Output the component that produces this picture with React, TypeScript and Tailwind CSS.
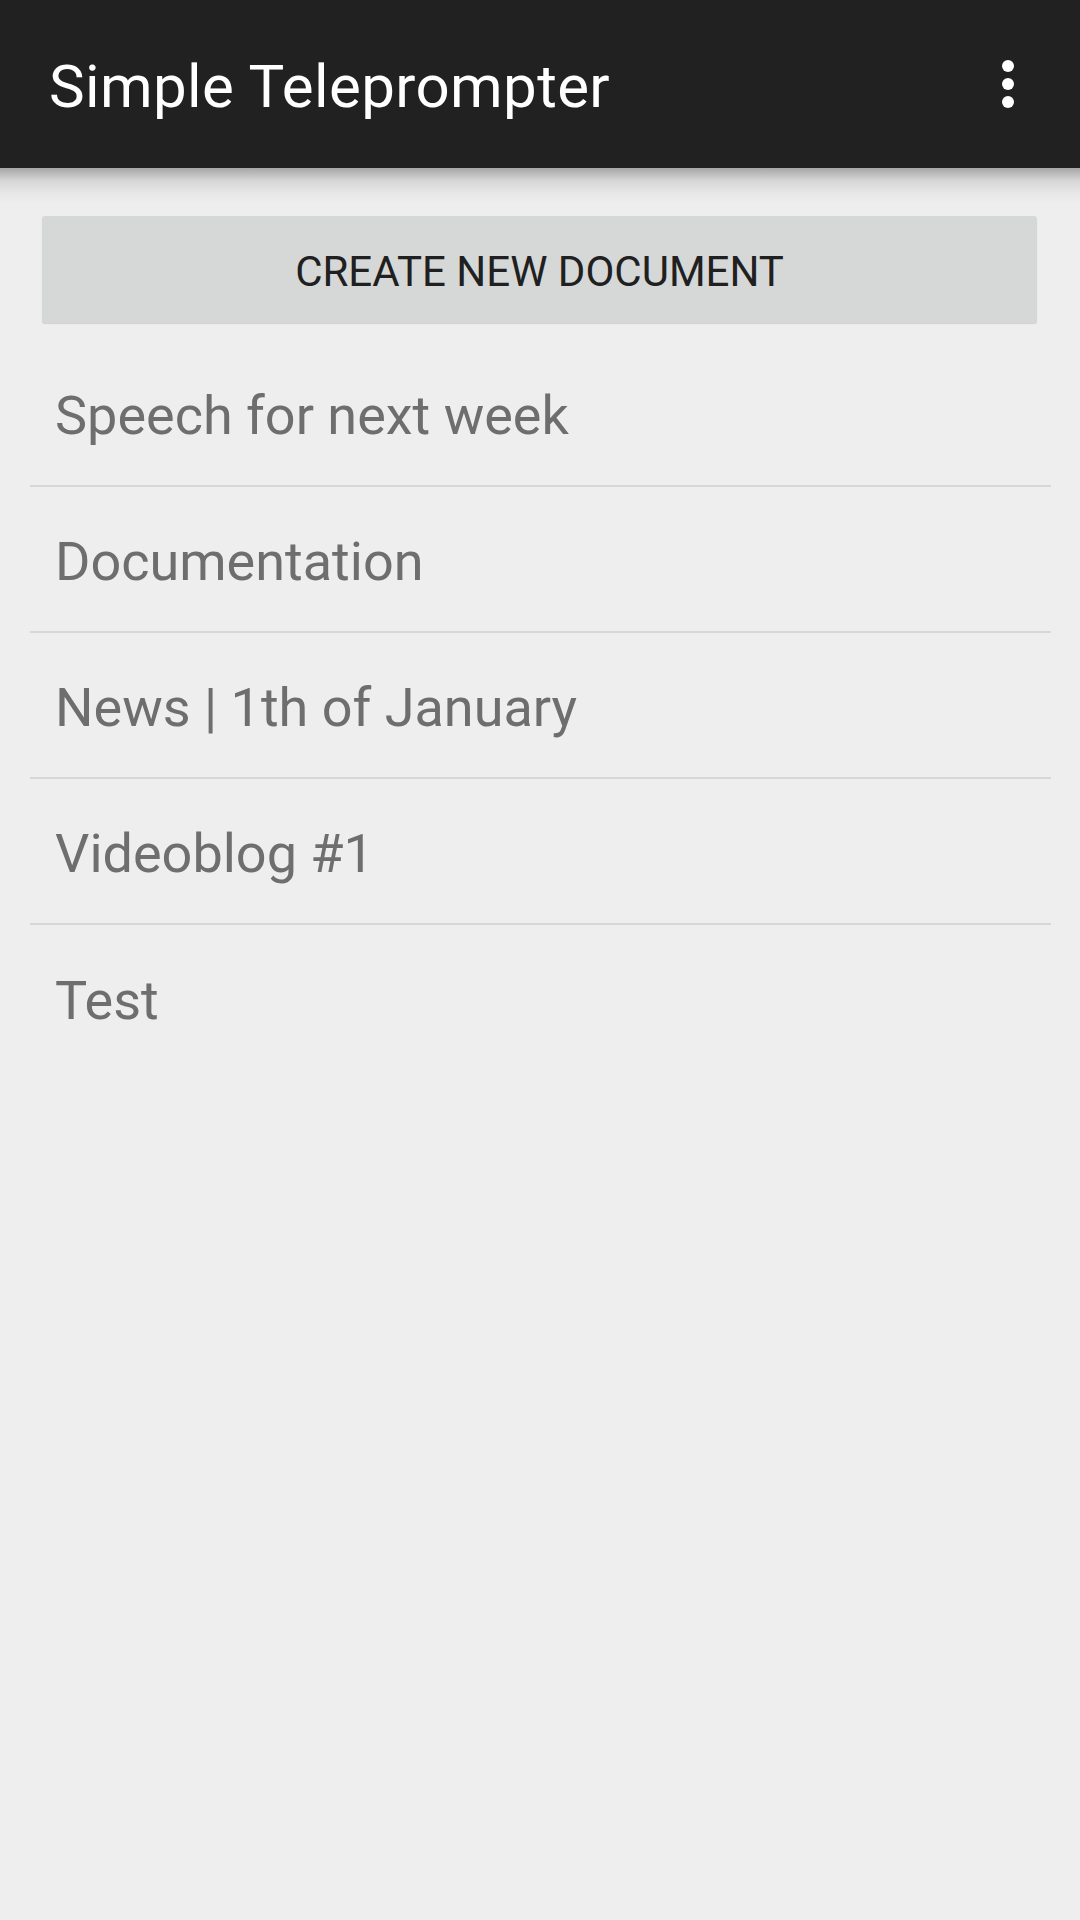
import React from "react";

const items = [
  "Speech for next week",
  "Documentation",
  "News | 1th of January",
  "Videoblog #1",
  "Test",
];

export default function App() {
  return (
    <div
      className="w-[1080px] h-[1920px] bg-[#eeeeee] flex flex-col overflow-hidden"
      style={{ fontFamily: "Roboto, 'Noto Sans', sans-serif" }}
    >
      <header className="relative z-10 h-[168px] bg-[#212121] flex items-center justify-between pl-[49px] pr-[36px] shrink-0">
        <h1 className="text-[60px] leading-none tracking-[0.4px] text-white font-normal pt-[5px]">Simple Teleprompter</h1>
        <svg width="72" height="72" viewBox="0 0 24 24" className="fill-white">
          <circle cx="12" cy="6" r="2" />
          <circle cx="12" cy="12" r="2" />
          <circle cx="12" cy="18" r="2" />
        </svg>
        <div className="absolute left-0 right-0 top-full h-[36px] bg-[linear-gradient(to_bottom,rgba(0,0,0,0.3),rgba(0,0,0,0.1)_35%,rgba(0,0,0,0.03)_70%,rgba(0,0,0,0))]" />
      </header>

      <div className="pt-[48px] pl-[42px] pr-[43px]">
        <button className="w-full h-[107px] bg-[#d6d7d7] rounded-[3px] shadow-[0_1px_1px_rgba(0,0,0,0.12)] flex items-center justify-center pt-[4px] text-[42px] leading-none text-[#202020] font-normal">
          CREATE NEW DOCUMENT
        </button>
      </div>

      <ul className="mt-[18px] ml-[30px] mr-[29px]">
        {items.map((t, i) => (
          <li
            key={t}
            className={`h-[146px] flex items-center pl-[25px] pt-[6px] ${
              i < items.length - 1 ? "border-b-2 border-[#d7d7d7]" : ""
            }`}
          >
            <span className="text-[54px] leading-none text-[#6e6e6e]">{t}</span>
          </li>
        ))}
      </ul>
    </div>
  );
}
